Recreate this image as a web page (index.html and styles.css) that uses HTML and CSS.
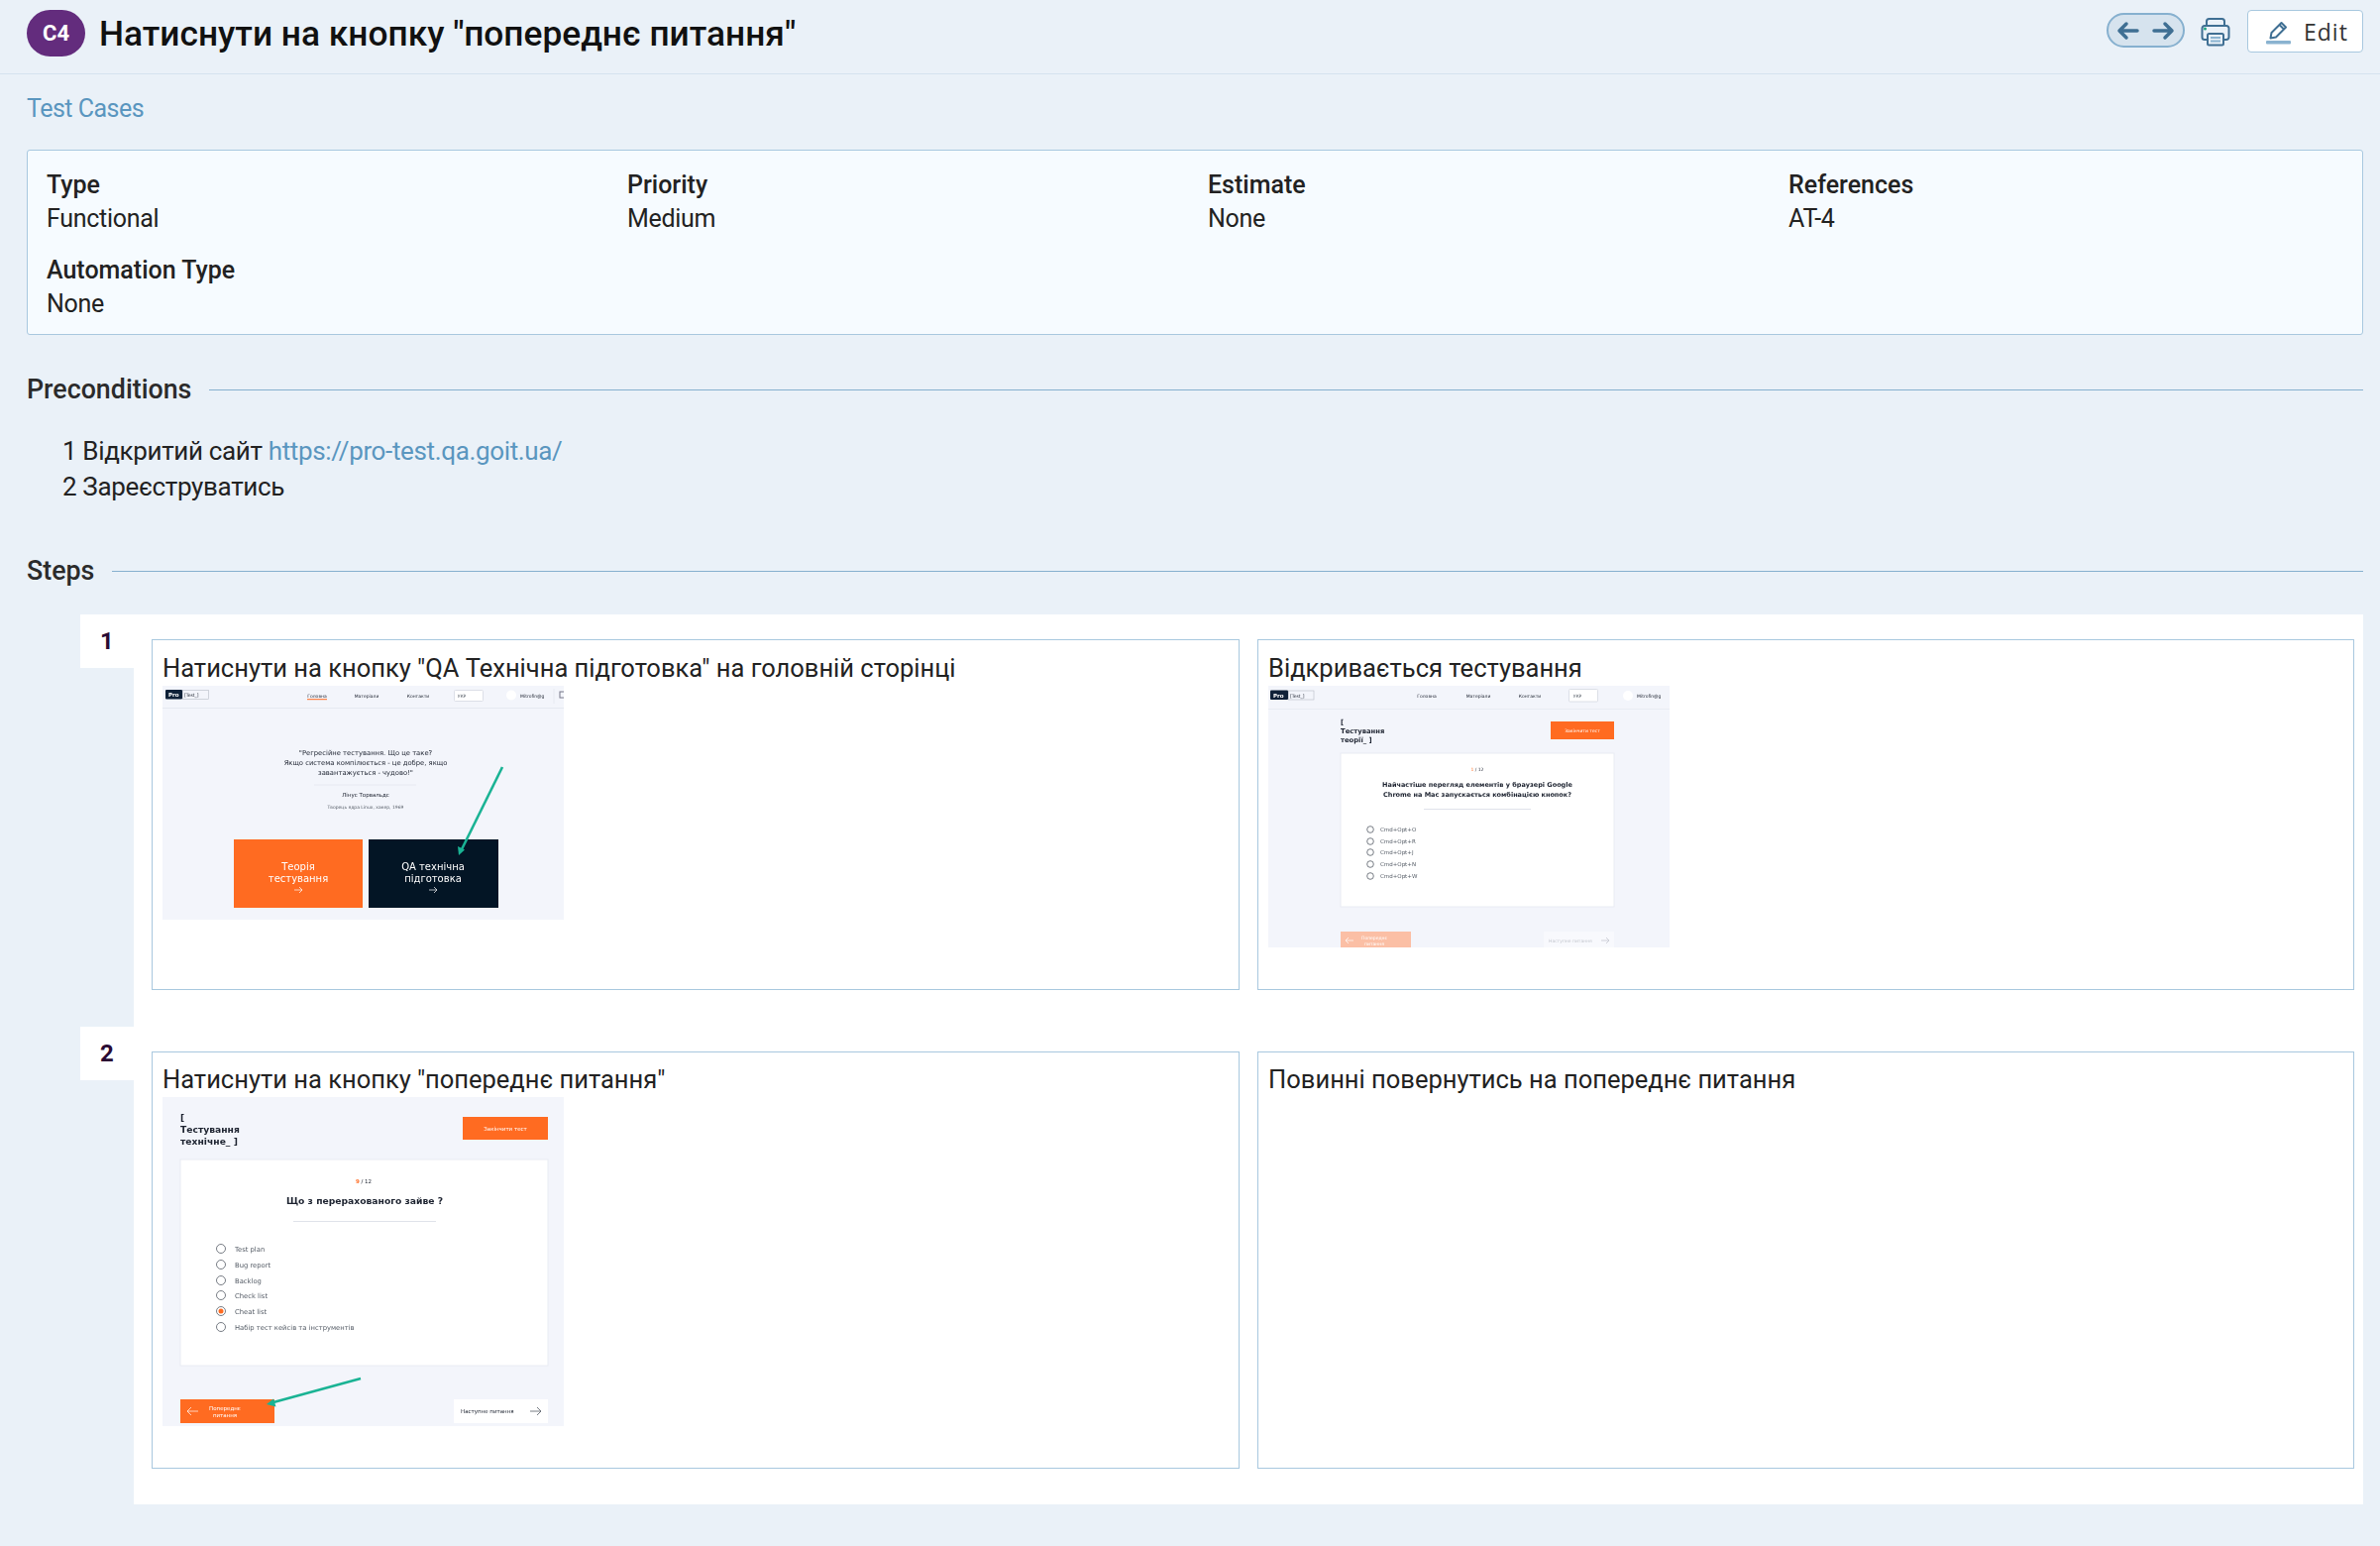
FILE: index.html
```html
<!DOCTYPE html>
<html lang="uk">
<head>
    <title>Test Case C4</title>
    <link rel="stylesheet" href="styles.css">
</head>
<body>
    <div class="header">
        <span class="badge">C4</span>
        <h1 class="title">Натиснути на кнопку "попереднє питання"</h1>
        <div class="pager">
            <svg width="24" height="20" viewBox="0 0 24 20"><path d="M21 10H3M10 3l-7 7 7 7" class="pager-arrow"/></svg>
            <svg width="24" height="20" viewBox="0 0 24 20"><path d="M3 10h18M14 3l7 7-7 7" class="pager-arrow"/></svg>
        </div>
        <svg class="print" width="30" height="30" viewBox="0 0 30 30">
            <path d="M6 9V4.500A2.500 2.500 0 0 1 8.500 2h13A2.500 2.500 0 0 1 24 4.500V9" class="print-line"/>
            <path d="M7 23H4a2.500 2.500 0 0 1-2.500-2.500v-9A2.500 2.500 0 0 1 4 9h22a2.500 2.500 0 0 1 2.500 2.500v9A2.500 2.500 0 0 1 26 23h-3" class="print-line"/>
            <rect x="7" y="17" width="16" height="11.500" rx="1.500" class="print-line"/>
            <path d="M10 21h10M10 24.500h10" class="print-soft"/>
            <circle cx="4.500" cy="12" r="1.500" fill="#1fa57f"/>
        </svg>
        <button class="edit-btn">
            <svg width="26" height="26" viewBox="0 0 26 26">
                <path d="M4.500 19.500l1-5.500L15.500 4l4.500 4.500-10 10z" class="pen"/>
                <path d="M13.500 6l4.500 4.500" class="pen"/>
                <rect x="0" y="22" width="25" height="3.500" rx="1" fill="#8ab3d0"/>
            </svg>
            Edit
        </button>
    </div>

    <div class="content">
        <a class="crumb" href="#">Test Cases</a>

        <div class="info-box">
            <div class="info-item"><b>Type</b><span>Functional</span></div>
            <div class="info-item"><b>Priority</b><span>Medium</span></div>
            <div class="info-item"><b>Estimate</b><span>None</span></div>
            <div class="info-item"><b>References</b><span>AT-4</span></div>
            <div class="info-item"><b>Automation Type</b><span>None</span></div>
        </div>

        <div class="section-head section-pre"><h2>Preconditions</h2><i></i></div>
        <div class="pre-text">
            <p>1 Відкритий сайт <a href="#">https://pro-test.qa.goit.ua/</a></p>
            <p>2 Зареєструватись</p>
        </div>

        <div class="section-head section-steps"><h2>Steps</h2><i></i></div>

        <div class="step">
            <div class="step-num">1</div>
            <div class="step-body">
                <div class="step-card card-left">
                    <p>Натиснути на кнопку "QA Технічна підготовка" на головній сторінці</p>
                    <svg class="shot" width="405" height="236" viewBox="0 0 405 236">
                        <rect width="405" height="236" fill="#f3f5fb"/>
                        <path d="M0 22.500h405" stroke="#e6e9f1"/>
                        <rect x="3" y="4" width="17" height="9.500" rx="1" fill="#0f2138"/>
                        <text x="6" y="11" class="t5 tw tb">Pro</text>
                        <rect x="20.500" y="4.500" width="26" height="9" fill="none" stroke="#b8bcc6" stroke-width="0.600"/>
                        <text x="22" y="11" class="t4 td">[Test_]</text>
                        <text x="156" y="12" class="t4 td tc">Головна</text>
                        <path d="M146 13.700h20" stroke="#ff6b21"/>
                        <text x="206" y="12" class="t4 td tc">Матеріали</text>
                        <text x="258" y="12" class="t4 td tc">Контакти</text>
                        <rect x="294.500" y="4.500" width="29" height="11" rx="1" fill="#fff" stroke="#dcdfe7"/>
                        <text x="302" y="12" class="t4 tg tc">УКР</text>
                        <circle cx="352" cy="9.500" r="5" fill="#fff"/>
                        <text x="361" y="12" class="t4 td">Mitrofin@g</text>
                        <path d="M395 3v15" stroke="#e6e9f1"/>
                        <rect x="401" y="6" width="5" height="6" fill="none" stroke="#778"/>
                        <text x="205" y="69.500" class="t7 td tc">"Регресійне тестування. Що це таке?</text>
                        <text x="205" y="79.500" class="t7 td tc">Якщо система компілюється - це добре, якщо</text>
                        <text x="205" y="89.500" class="t7 td tc">завантажується - чудово!"</text>
                        <path d="M153 100h103" stroke="#e6e9f1"/>
                        <text x="205" y="112" class="t5 td tc">Лінус Торвальдс</text>
                        <text x="205" y="124" class="t4 tg tc">Творець ядра Linux, хакер, 1969</text>
                        <rect x="72" y="155" width="130" height="69" fill="#ff6b21"/>
                        <rect x="208" y="155" width="131" height="69" fill="#031525"/>
                        <text x="137" y="186" class="t10 tw tc">Теорія</text>
                        <text x="137" y="198" class="t10 tw tc">тестування</text>
                        <path d="M133 206h8M138 203l3 3-3 3" class="thin-w"/>
                        <text x="273" y="186" class="t10 tw tc">QA технічна</text>
                        <text x="273" y="198" class="t10 tw tc">підготовка</text>
                        <path d="M269 206h8M274 203l3 3-3 3" class="thin-w"/>
                        <path d="M343 82L302 165" class="green"/>
                        <path d="M299 171l-1-9 7 3.500z" fill="#1ab394"/>
                    </svg>
                </div>
                <div class="step-card card-right">
                    <p>Відкривається тестування</p>
                    <svg class="shot" width="405" height="264" viewBox="0 0 405 264">
                        <rect width="405" height="264" fill="#f3f5fb"/>
                        <path d="M0 23.500h405" stroke="#e9ecf3"/>
                        <rect x="2" y="4.500" width="18" height="9.500" rx="1" fill="#0f2138"/>
                        <text x="5" y="11.500" class="t5 tw tb">Pro</text>
                        <rect x="20.500" y="5" width="25.500" height="9" fill="none" stroke="#b8bcc6" stroke-width="0.600"/>
                        <text x="22" y="11.500" class="t4 td">[Test_]</text>
                        <text x="160" y="12" class="t4 td tc">Головна</text>
                        <text x="212" y="12" class="t4 td tc">Матеріали</text>
                        <text x="264" y="12" class="t4 td tc">Контакти</text>
                        <rect x="303.500" y="3.500" width="29" height="12.500" rx="1" fill="#fff" stroke="#dcdfe7"/>
                        <text x="312" y="12" class="t4 tg tc">УКР</text>
                        <circle cx="363" cy="10" r="5" fill="#fff"/>
                        <text x="372" y="12" class="t4 td">Mitrofin@g</text>
                        <text x="73" y="38.500" class="t7 td tb">[</text>
                        <text x="73" y="47.500" class="t7 td tb">Тестування</text>
                        <text x="73" y="56.500" class="t7 td tb">теорії_ ]</text>
                        <rect x="285" y="36" width="64" height="18" fill="#ff6b21"/>
                        <text x="317" y="47" class="t4 tw tc">Закінчити тест</text>
                        <rect x="73" y="68" width="276" height="155" fill="#fff" stroke="#e9ecf3"/>
                        <text x="211" y="86" class="t4 td tc"><tspan fill="#ff6b21">1</tspan> / 12</text>
                        <text x="211" y="101.500" class="t6 td tc tb">Найчастіше перегляд елементів у браузері Google</text>
                        <text x="211" y="111.500" class="t6 td tc tb">Chrome на Mac запускається комбінацією кнопок?</text>
                        <path d="M157 124.500h108" stroke="#dfe2ea"/>
                        <circle cx="103" cy="145" r="3.300" class="radio"/><text x="113" y="147" class="t5 tg">Cmd+Opt+O</text>
                        <circle cx="103" cy="157" r="3.300" class="radio"/><text x="113" y="159" class="t5 tg">Cmd+Opt+R</text>
                        <circle cx="103" cy="168" r="3.300" class="radio"/><text x="113" y="170" class="t5 tg">Cmd+Opt+J</text>
                        <circle cx="103" cy="180" r="3.300" class="radio"/><text x="113" y="182" class="t5 tg">Cmd+Opt+N</text>
                        <circle cx="103" cy="192" r="3.300" class="radio"/><text x="113" y="194" class="t5 tg">Cmd+Opt+W</text>
                        <rect x="73" y="248" width="71" height="16" fill="#fbbfa5"/>
                        <path d="M78 257h8M81 254l-3 3 3 3" class="thin-w"/>
                        <text x="107" y="256" class="t4 tw tc">Попереднє</text>
                        <text x="107" y="262" class="t4 tw tc">питання</text>
                        <rect x="278" y="248" width="71" height="16" fill="#f8f9fd"/>
                        <text x="283" y="259" class="t4 tf">Наступне питання</text>
                        <path d="M336 257h8M341 254l3 3-3 3" class="thin-f"/>
                    </svg>
                </div>
            </div>
        </div>

        <div class="step">
            <div class="step-num">2</div>
            <div class="step-body">
                <div class="step-card card-left">
                    <p>Натиснути на кнопку "попереднє питання"</p>
                    <svg class="shot" width="405" height="332" viewBox="0 0 405 332">
                        <rect width="405" height="332" fill="#f3f5fb"/>
                        <text x="18" y="24" class="t9 td tb">[</text>
                        <text x="18" y="36" class="t9 td tb">Тестування</text>
                        <text x="18" y="48" class="t9 td tb">технічне_ ]</text>
                        <rect x="303" y="20" width="86" height="23" fill="#ff6b21"/>
                        <text x="346" y="33.500" class="t5 tw tc">Закінчити тест</text>
                        <rect x="18" y="63" width="371" height="208" fill="#fff" stroke="#e9ecf3"/>
                        <text x="203" y="87" class="t5 td tc"><tspan fill="#ff6b21" font-weight="700">9</tspan> / 12</text>
                        <text x="204" y="108" class="t9 td tc tb">Що з перерахованого зайве ?</text>
                        <path d="M132 125.500h144" stroke="#dfe2ea"/>
                        <circle cx="59" cy="153" r="4.500" class="radio"/><text x="73" y="155.500" class="t7 tg">Test plan</text>
                        <circle cx="59" cy="169" r="4.500" class="radio"/><text x="73" y="171.500" class="t7 tg">Bug report</text>
                        <circle cx="59" cy="185" r="4.500" class="radio"/><text x="73" y="187.500" class="t7 tg">Backlog</text>
                        <circle cx="59" cy="200" r="4.500" class="radio"/><text x="73" y="202.500" class="t7 tg">Check list</text>
                        <circle cx="59" cy="216" r="4.500" class="radio"/><circle cx="59" cy="216" r="2.500" fill="#ff6b21"/><text x="73" y="218.500" class="t7 tg">Cheat list</text>
                        <circle cx="59" cy="232" r="4.500" class="radio"/><text x="73" y="234.500" class="t7 tg">Набір тест кейсів та інструментів</text>
                        <rect x="18" y="305" width="95" height="24" fill="#ff6b21"/>
                        <path d="M25 317h11M29 313l-4 4 4 4" class="thin-w"/>
                        <text x="63" y="316" class="t5 tw tc">Попереднє</text>
                        <text x="63" y="323" class="t5 tw tc">питання</text>
                        <rect x="294" y="305" width="95" height="24" fill="#fff"/>
                        <text x="301" y="319" class="t5 td">Наступне питання</text>
                        <path d="M371 317h11M378 313l4 4-4 4" class="thin-g"/>
                        <path d="M200 284L112 308" class="green"/>
                        <path d="M105 310l7-5.500 2.500 8z" fill="#1ab394"/>
                    </svg>
                </div>
                <div class="step-card card-right">
                    <p>Повинні повернутись на попереднє питання</p>
                </div>
            </div>
        </div>
    </div>
</body>
</html>
```

FILE: styles.css
```css
body {
    font-family: Roboto, "Noto Sans", sans-serif;
    background-color: #eaf1f8;
    color: #222;
    margin: 0;
    padding: 0;
}

.header {
    height: 74px;
    border-bottom: 1px solid #d5e3ef;
    display: flex;
    align-items: flex-start;
    padding: 0 17px 0 27px;
}

.badge {
    width: 59px;
    height: 47px;
    margin-top: 10px;
    border-radius: 24px;
    background-color: #632c7d;
    color: white;
    font-size: 22px;
    font-weight: 700;
    display: flex;
    align-items: center;
    justify-content: center;
}

.title {
    flex: 1;
    margin: 14px 0 0 14px;
    font-size: 35.300px;
    line-height: 40px;
    font-weight: 500;
    color: #111;
}

.pager {
    width: 79px;
    height: 35px;
    margin: 13px 16px 0 0;
    box-sizing: border-box;
    border: 2px solid #86b0cf;
    border-radius: 18px;
    background-color: #d6e3ee;
    display: flex;
    align-items: center;
    justify-content: space-between;
    padding: 0 8px;
}

.pager-arrow {
    fill: none;
    stroke: #3f6f93;
    stroke-width: 3.500;
    stroke-linecap: round;
    stroke-linejoin: round;
}

.print {
    margin: 17px 17px 0 0;
}

.print-line {
    fill: #eaf1f8;
    stroke: #3f6f93;
    stroke-width: 2;
}

.print-soft {
    fill: none;
    stroke: #8ab3d0;
    stroke-width: 2;
}

.edit-btn {
    width: 117px;
    height: 43px;
    margin-top: 10px;
    box-sizing: border-box;
    border: 1px solid #a8c8df;
    border-radius: 4px;
    background: white;
    color: #333;
    font-family: "Open Sans", sans-serif;
    font-size: 23px;
    letter-spacing: 1px;
    display: flex;
    align-items: center;
    gap: 12px;
    padding: 0 0 0 18px;
}

.pen {
    fill: none;
    stroke: #3f6f93;
    stroke-width: 2;
    stroke-linejoin: round;
}

.content {
    padding: 0 17px 0 27px;
}

.crumb {
    display: block;
    height: 76px;
    padding-top: 20px;
    box-sizing: border-box;
    font-size: 25px;
    letter-spacing: -0.500px;
    line-height: 30px;
    color: #5a96bf;
    text-decoration: none;
}

.info-box {
    height: 187px;
    box-sizing: border-box;
    border: 1px solid #a8c8df;
    border-radius: 3px;
    background-color: #f6fbff;
    padding: 18px 0 0 19px;
    display: grid;
    grid-template-columns: repeat(4, 586px);
    grid-auto-rows: 86px;
}

.info-item b {
    display: block;
    font-size: 25px;
    line-height: 34px;
    font-weight: 500;
}

.info-item span {
    display: block;
    font-size: 25px;
    letter-spacing: -0.300px;
    line-height: 34px;
}

.section-head {
    display: flex;
    align-items: center;
    gap: 18px;
}

.section-head h2 {
    margin: 0;
    font-size: 26.800px;
    line-height: 36px;
    font-weight: 500;
    color: #2b2b2b;
}

.section-head i {
    flex: 1;
    height: 1px;
    background-color: #86b0cf;
}

.section-pre {
    margin-top: 37px;
}

.pre-text {
    padding: 26px 0 0 36px;
    font-size: 26px;
    letter-spacing: -0.350px;
    line-height: 36px;
}

.pre-text p {
    margin: 0;
}

.pre-text a {
    color: #5a96bf;
    text-decoration: none;
}

.section-steps {
    margin-top: 49px;
    margin-bottom: 26px;
}

.step {
    display: flex;
    margin-left: 54px;
}

.step-num {
    width: 54px;
    height: 54px;
    flex-shrink: 0;
    background: white;
    color: #2a0a33;
    font-size: 24px;
    font-weight: 700;
    text-align: center;
    line-height: 54px;
}

.step-body {
    flex: 1;
    display: flex;
    gap: 18px;
    background: white;
    padding: 25px 9px 37px 18px;
}

.step + .step .step-body {
    padding-bottom: 36px;
}

.step-card {
    box-sizing: border-box;
    border: 1px solid #a8c8df;
    padding: 11px 10px 42px;
    font-size: 25.500px;
    line-height: 35px;
}

.step + .step .step-card {
    padding-top: 10px;
}

.card-left {
    flex: 1098;
}

.card-right {
    flex: 1107;
}

.step-card p {
    margin: 0;
}

.shot {
    display: block;
    filter: blur(0.500px);
}

.shot text {
    font-family: "DejaVu Sans", sans-serif;
}

.t4 { font-size: 4.500px; }
.t5 { font-size: 5.500px; }
.t6 { font-size: 6.500px; }
.t7 { font-size: 6.800px; }
.t9 { font-size: 9.200px; }
.t10 { font-size: 10px; }
.tw { fill: #fff; }
.td { fill: #1d2330; }
.tg { fill: #555c66; }
.tf { fill: #c4c7cf; }
.tb { font-weight: 700; }
.tc { text-anchor: middle; }

.radio {
    fill: #fff;
    stroke: #555c66;
    stroke-width: 0.800;
}

.thin-w {
    fill: none;
    stroke: #fff;
    stroke-width: 0.700;
}

.thin-g {
    fill: none;
    stroke: #555c66;
    stroke-width: 0.800;
}

.thin-f {
    fill: none;
    stroke: #c4c7cf;
    stroke-width: 0.800;
}

.green {
    fill: none;
    stroke: #1ab394;
    stroke-width: 2.600;
}
```
